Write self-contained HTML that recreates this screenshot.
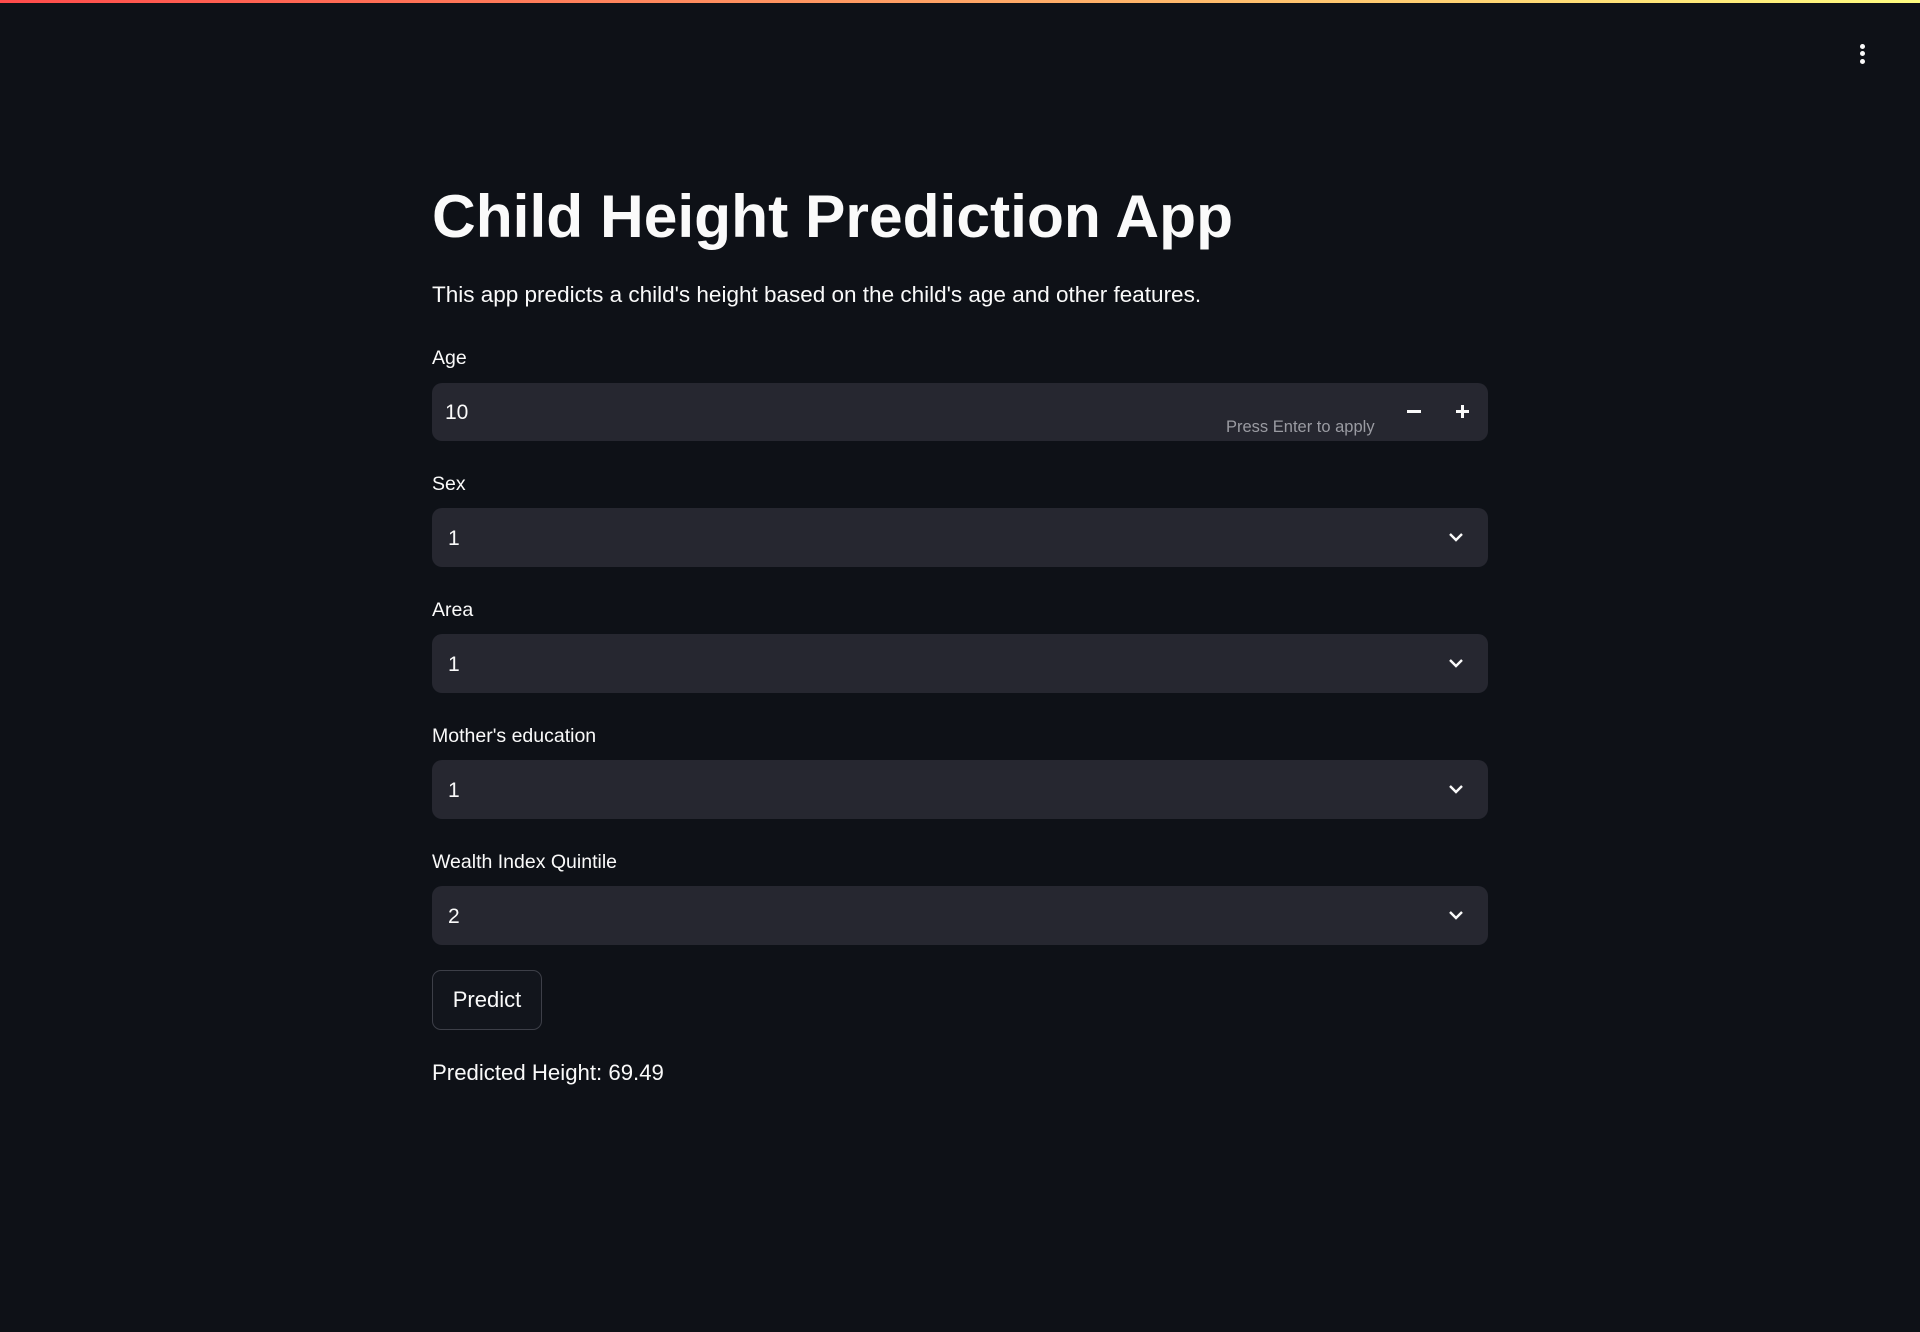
<!DOCTYPE html>
<html><head><meta charset="utf-8"><style>
*{box-sizing:border-box;margin:0;padding:0}
body{width:1920px;height:1332px;background:#0e1117;color:#fafafa;font-family:"Liberation Sans",sans-serif;position:relative;overflow:hidden}
.bar{position:absolute;top:0;left:0;width:1920px;height:3px;background:linear-gradient(90deg,#ff4b4b,#fffd80)}
.dot{position:absolute;left:1860px;width:5px;height:5px;border-radius:50%;background:#fafafa}
.abs{position:absolute}
h1{position:absolute;left:432px;top:176px;font-size:60.5px;font-weight:bold;line-height:80px;white-space:nowrap}
.p{left:432px;top:282px;font-size:22.5px}
.lbl{left:432px;font-size:19.5px}
.box{position:absolute;left:432px;width:1056px;background:#262730;border-radius:10px}
.val{position:absolute;left:16px;font-size:21px}
.chev{position:absolute;right:24px;top:50%;margin-top:-9px}
</style></head><body>
<div class="bar"></div>
<div class="dot" style="top:44px"></div><div class="dot" style="top:51px"></div><div class="dot" style="top:59px"></div>
<h1>Child Height Prediction App</h1>
<div class="abs p">This app predicts a child's height based on the child's age and other features.</div>

<div class="abs lbl" style="top:347px">Age</div>
<div class="box" style="top:383px;height:58px">
 <div class="val" style="left:13px;top:18px">10</div>
 <div class="abs" style="left:794px;top:35px;font-size:16.5px;color:#9a9ba2">Press Enter to apply</div>
 <div class="abs" style="left:975px;top:27px;width:14px;height:3px;background:#fafafa"></div>
 <div class="abs" style="left:1024px;top:27px;width:13px;height:3px;background:#fafafa"></div>
 <div class="abs" style="left:1029px;top:22px;width:3px;height:13px;background:#fafafa"></div>
</div>

<div class="abs lbl" style="top:473px">Sex</div>
<div class="box" style="top:508px;height:59px"><div class="val" style="top:19px">1</div>
<svg class="chev" width="16" height="16" viewBox="0 0 16 16"><path d="M2 5l6 6 6-6" stroke="#fafafa" stroke-width="2.4" fill="none"/></svg></div>

<div class="abs lbl" style="top:599px">Area</div>
<div class="box" style="top:634px;height:59px"><div class="val" style="top:19px">1</div>
<svg class="chev" width="16" height="16" viewBox="0 0 16 16"><path d="M2 5l6 6 6-6" stroke="#fafafa" stroke-width="2.4" fill="none"/></svg></div>

<div class="abs lbl" style="top:725px">Mother's education</div>
<div class="box" style="top:760px;height:59px"><div class="val" style="top:19px">1</div>
<svg class="chev" width="16" height="16" viewBox="0 0 16 16"><path d="M2 5l6 6 6-6" stroke="#fafafa" stroke-width="2.4" fill="none"/></svg></div>

<div class="abs lbl" style="top:851px">Wealth Index Quintile</div>
<div class="box" style="top:886px;height:59px"><div class="val" style="top:19px">2</div>
<svg class="chev" width="16" height="16" viewBox="0 0 16 16"><path d="M2 5l6 6 6-6" stroke="#fafafa" stroke-width="2.4" fill="none"/></svg></div>

<div class="abs" style="left:432px;top:970px;width:110px;height:60px;border:1px solid #3d3f48;border-radius:9px;background:#12151c;font-size:22px;text-align:center;line-height:58px">Predict</div>
<div class="abs" style="left:432px;top:1060px;font-size:22.2px">Predicted Height: 69.49</div>
</body></html>
